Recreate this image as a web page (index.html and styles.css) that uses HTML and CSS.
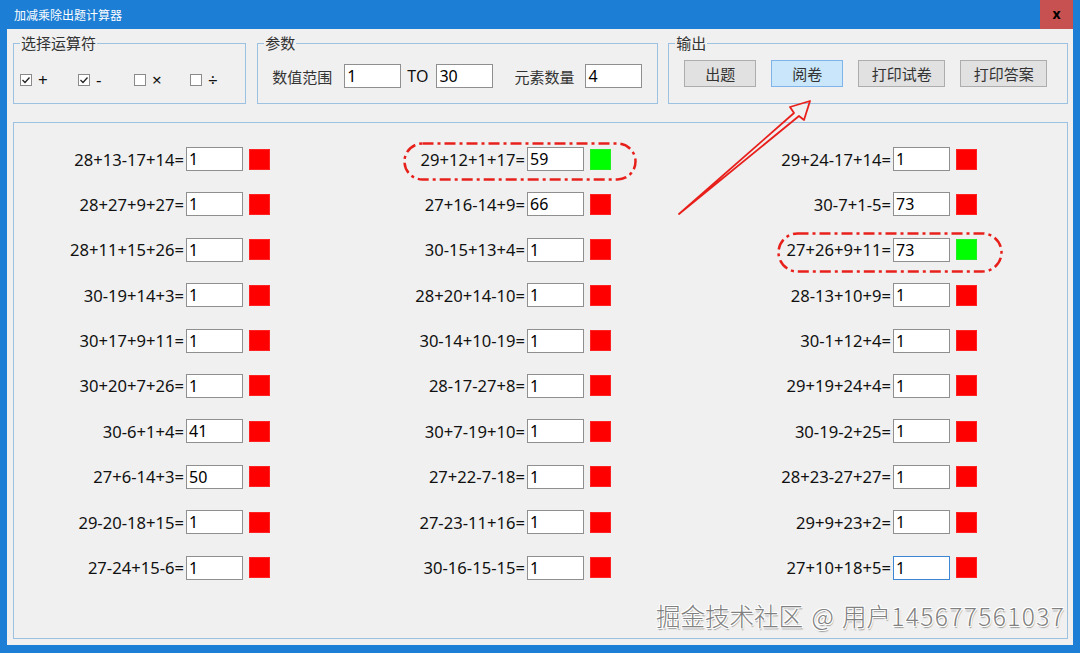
FILE: index.html
```html
<!DOCTYPE html>
<html lang="zh">
<head>
  <meta charset="UTF-8" />
  <title>加减乘除出题计算器</title>
  <link rel="stylesheet" href="styles.css">
</head>
<body>
  <div class="window">
    <div class="titlebar">
      <span class="title">加减乘除出题计算器</span>
      <span class="close">x</span>
    </div>
    <div class="client">
      <div class="groups">
        <fieldset class="grp grp-ops">
          <legend>选择运算符</legend>
          <div class="ops">
            <label class="op"><span class="box"><svg width="10" height="10" viewBox="0 0 10 10"><polyline points="1.5,5 4,7.5 8.5,2.5" fill="none" stroke="#222" stroke-width="1.3"/></svg></span>+</label>
            <label class="op"><span class="box"><svg width="10" height="10" viewBox="0 0 10 10"><polyline points="1.5,5 4,7.5 8.5,2.5" fill="none" stroke="#222" stroke-width="1.3"/></svg></span>-</label>
            <label class="op"><span class="box"></span>×</label>
            <label class="op"><span class="box"></span>÷</label>
          </div>
        </fieldset>
        <fieldset class="grp grp-params">
          <legend>参数</legend>
          <div class="params">
            <span class="lbl">数值范围</span>
            <input class="num" value="1">
            <span class="lbl to">TO</span>
            <input class="num" value="30">
            <span class="lbl count">元素数量</span>
            <input class="num" value="4">
          </div>
        </fieldset>
        <fieldset class="grp grp-out">
          <legend>输出</legend>
          <div class="btns">
            <button class="btn w1">出题</button>
            <button class="btn w1 hot">阅卷</button>
            <button class="btn w2">打印试卷</button>
            <button class="btn w2">打印答案</button>
          </div>
        </fieldset>
      </div>

      <div class="sheet">
        <div class="cell"><span class="eq">28+13-17+14=</span><input class="ans" value="1"><span class="mark bad"></span></div>
        <div class="cell"><span class="eq">29+12+1+17=</span><input class="ans" value="59"><span class="mark ok"></span></div>
        <div class="cell"><span class="eq">29+24-17+14=</span><input class="ans" value="1"><span class="mark bad"></span></div>

        <div class="cell"><span class="eq">28+27+9+27=</span><input class="ans" value="1"><span class="mark bad"></span></div>
        <div class="cell"><span class="eq">27+16-14+9=</span><input class="ans" value="66"><span class="mark bad"></span></div>
        <div class="cell"><span class="eq">30-7+1-5=</span><input class="ans" value="73"><span class="mark bad"></span></div>

        <div class="cell"><span class="eq">28+11+15+26=</span><input class="ans" value="1"><span class="mark bad"></span></div>
        <div class="cell"><span class="eq">30-15+13+4=</span><input class="ans" value="1"><span class="mark bad"></span></div>
        <div class="cell"><span class="eq">27+26+9+11=</span><input class="ans" value="73"><span class="mark ok"></span></div>

        <div class="cell"><span class="eq">30-19+14+3=</span><input class="ans" value="1"><span class="mark bad"></span></div>
        <div class="cell"><span class="eq">28+20+14-10=</span><input class="ans" value="1"><span class="mark bad"></span></div>
        <div class="cell"><span class="eq">28-13+10+9=</span><input class="ans" value="1"><span class="mark bad"></span></div>

        <div class="cell"><span class="eq">30+17+9+11=</span><input class="ans" value="1"><span class="mark bad"></span></div>
        <div class="cell"><span class="eq">30-14+10-19=</span><input class="ans" value="1"><span class="mark bad"></span></div>
        <div class="cell"><span class="eq">30-1+12+4=</span><input class="ans" value="1"><span class="mark bad"></span></div>

        <div class="cell"><span class="eq">30+20+7+26=</span><input class="ans" value="1"><span class="mark bad"></span></div>
        <div class="cell"><span class="eq">28-17-27+8=</span><input class="ans" value="1"><span class="mark bad"></span></div>
        <div class="cell"><span class="eq">29+19+24+4=</span><input class="ans" value="1"><span class="mark bad"></span></div>

        <div class="cell"><span class="eq">30-6+1+4=</span><input class="ans" value="41"><span class="mark bad"></span></div>
        <div class="cell"><span class="eq">30+7-19+10=</span><input class="ans" value="1"><span class="mark bad"></span></div>
        <div class="cell"><span class="eq">30-19-2+25=</span><input class="ans" value="1"><span class="mark bad"></span></div>

        <div class="cell"><span class="eq">27+6-14+3=</span><input class="ans" value="50"><span class="mark bad"></span></div>
        <div class="cell"><span class="eq">27+22-7-18=</span><input class="ans" value="1"><span class="mark bad"></span></div>
        <div class="cell"><span class="eq">28+23-27+27=</span><input class="ans" value="1"><span class="mark bad"></span></div>

        <div class="cell"><span class="eq">29-20-18+15=</span><input class="ans" value="1"><span class="mark bad"></span></div>
        <div class="cell"><span class="eq">27-23-11+16=</span><input class="ans" value="1"><span class="mark bad"></span></div>
        <div class="cell"><span class="eq">29+9+23+2=</span><input class="ans" value="1"><span class="mark bad"></span></div>

        <div class="cell"><span class="eq">27-24+15-6=</span><input class="ans" value="1"><span class="mark bad"></span></div>
        <div class="cell"><span class="eq">30-16-15-15=</span><input class="ans" value="1"><span class="mark bad"></span></div>
        <div class="cell"><span class="eq">27+10+18+5=</span><input class="ans focus" value="1"><span class="mark bad"></span></div>
      </div>
    </div>

    <!-- red annotations drawn over the screenshot -->
    <svg class="notes" width="1080" height="653" viewBox="0 0 1080 653">
      <rect x="404.5" y="143.5" width="231" height="36" rx="18" fill="none" stroke="#e8201c" stroke-width="2.5" stroke-dasharray="11 4 3 4"/>
      <rect x="778.5" y="233.5" width="223" height="38" rx="19" fill="none" stroke="#e8201c" stroke-width="2.5" stroke-dasharray="11 4 3 4"/>
      <path d="M679 214 L794 113 L790 107 L810 101 L804 120 L799 116 Z" fill="none" stroke="#e8201c" stroke-width="1.8" stroke-linejoin="round"/>
    </svg>
    <div class="watermark">掘金技术社区 @ 用户<span class="digits">145677561037</span></div>
  </div>
</body>
</html>
```

FILE: styles.css
```css
body {
  margin: 0;
  font-family: "Noto Sans", "Noto Sans CJK SC", sans-serif;
  background: #1c7ed4;
}
.window {
  position: relative;
  width: 1080px;
  height: 653px;
  background: #1c7ed4;
  display: flex;
  flex-direction: column;
  box-sizing: border-box;
  padding: 0 7px 8px 7px;
}
.titlebar {
  height: 29px;
  display: flex;
  align-items: center;
  justify-content: space-between;
  color: #fff;
}
.title {
  font-family: "Noto Sans CJK SC", sans-serif;
  font-size: 12px;
  padding-left: 7px;
}
.close {
  align-self: stretch;
  width: 33px;
  background: #c75050;
  color: #000;
  font-weight: bold;
  font-size: 14px;
  display: flex;
  align-items: center;
  justify-content: center;
  padding-bottom: 2px;
  box-sizing: border-box;
}
.client {
  flex: 1;
  background: #f0f0f0;
  padding: 5px 5px 0 6px;
  display: flex;
  flex-direction: column;
}

/* top group boxes */
.groups {
  display: flex;
}
.grp {
  margin: 0;
  min-width: 0;
  border: 1px solid #9dc1e0;
  padding: 0 6px;
  box-sizing: border-box;
  height: 70px;
}
.grp legend {
  font-family: "Noto Sans CJK SC", sans-serif;
  font-size: 15px;
  line-height: 18px;
  padding: 0 1px;
  color: #333;
}
.grp-ops { width: 234px; }
.grp-params { width: 402px; margin-left: 11px; }
.grp-out { width: 401px; margin-left: 10px; }

.ops {
  display: flex;
  padding-top: 18px;
}
.op {
  width: 56px;
  display: flex;
  align-items: center;
  font-size: 17px;
  line-height: 20px;
  color: #111;
}
.op:first-child { width: 58px; }
.op:last-child { width: auto; }
.box {
  width: 12px;
  height: 12px;
  box-sizing: border-box;
  border: 1px solid #8a8a8a;
  background: #fff;
  margin-right: 6px;
  display: flex;
  align-items: center;
  justify-content: center;
}
.params {
  display: flex;
  align-items: center;
  padding: 12px 0 0 8px;
}
.lbl {
  font-family: "Noto Sans CJK SC", sans-serif;
  font-size: 15px;
  color: #333;
  margin-right: 12px;
}
.lbl.to {
  font-family: "Noto Sans", sans-serif;
  font-size: 16px;
  color: #111;
  margin-left: 6px;
  margin-right: 8px;
}
.lbl.count { margin-left: 21px; margin-right: 11px; }
.num, .ans {
  width: 57px;
  height: 24px;
  box-sizing: border-box;
  border: 1px solid #8f8f8f;
  background: #fff;
  padding: 0 2px;
  margin: 0;
  font-family: "Noto Sans", sans-serif;
  font-size: 16px;
  color: #000;
  outline: none;
}
.btns {
  display: flex;
  gap: 15px;
  padding: 8px 0 0 9px;
}
.btn {
  height: 27px;
  border: 1px solid #adadad;
  background: #e1e1e1;
  font-family: "Noto Sans CJK SC", sans-serif;
  font-size: 15px;
  color: #333;
  padding: 0;
}
.btn.w1 { width: 72px; }
.btn.w2 { width: 87px; }
.btn.hot {
  background: #c9e6fa;
  border-color: #7eb4ea;
}

/* answer sheet */
.sheet {
  margin-top: 18px;
  height: 517px;
  box-sizing: border-box;
  border: 1px solid #9dc1e0;
  padding-top: 24px;
  display: grid;
  grid-template-columns: 256px 341px 366px;
  grid-auto-rows: 24px;
  row-gap: 21.4px;
  align-content: start;
}
.cell {
  display: flex;
  justify-content: flex-end;
  align-items: center;
}
.eq {
  font-size: 16.6px;
  color: #111;
  margin-right: 2px;
}
.ans.focus { border-color: #3c86d4; }
.mark {
  width: 21px;
  height: 21px;
  margin-left: 6px;
  box-sizing: border-box;
}
.mark.bad { background: #ff0000; border: 1px solid #f22; }
.mark.ok { background: #00ff00; border: 1px solid #2e2; }

.notes {
  position: absolute;
  left: 0;
  top: 0;
  pointer-events: none;
}
.watermark {
  position: absolute;
  left: 656px;
  top: 600px;
  font-family: "Noto Sans CJK SC", sans-serif;
  font-size: 24.5px;
  line-height: 32px;
  font-weight: 300;
  color: #808080;
  text-shadow: 1px 1px 0 #fff, -1px -1px 0 #fff, 1px -1px 0 #fff, -1px 1px 0 #fff, 1px 2px 1px #999;
  white-space: nowrap;
  word-spacing: 3px;
}
.watermark .digits { letter-spacing: 1.4px; }
```
